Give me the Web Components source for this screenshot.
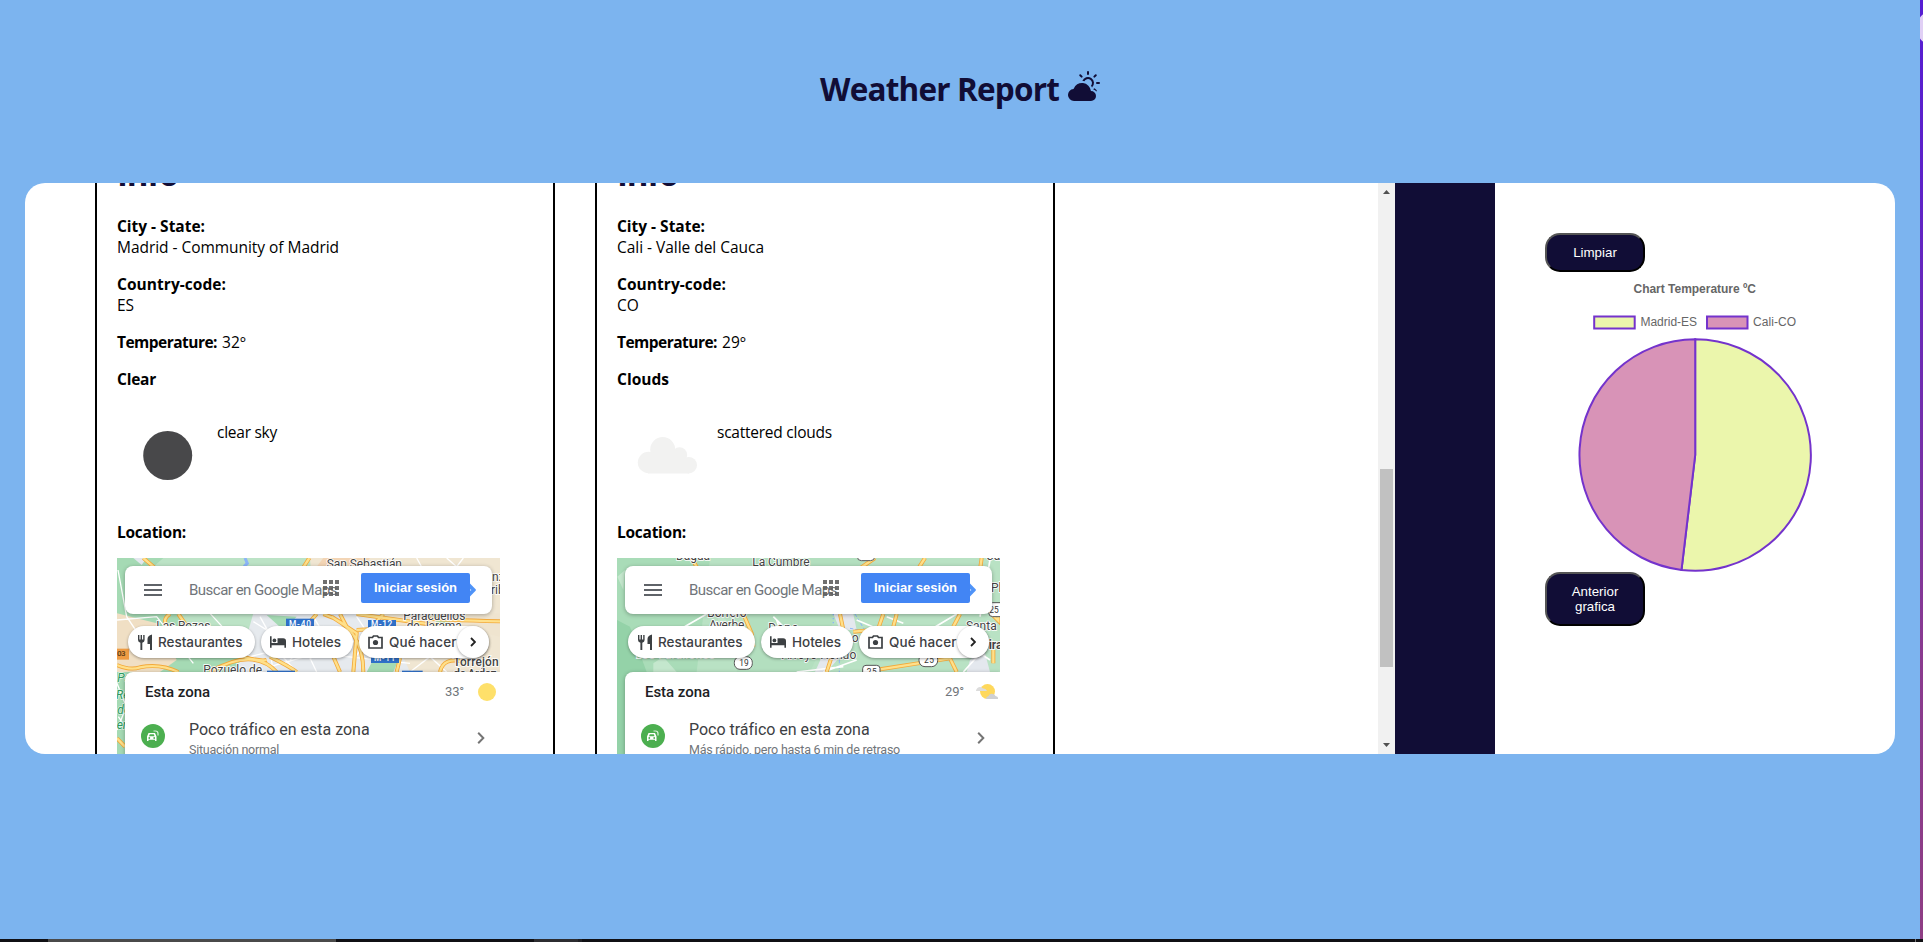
<!DOCTYPE html>
<html lang="es">
<head>
<meta charset="utf-8">
<title>Weather Report</title>
<style>
html,body{margin:0;height:100%;overflow:hidden;background:#7cb4ef}
body{font-family:"Open Sans","Noto Sans",sans-serif;font-size:16px;line-height:21px;color:#000}
</style>
</head>
<body>
<weather-app></weather-app>
<script>
function define(name, html, setup) {
  customElements.define(name, class extends HTMLElement {
    connectedCallback() {
      if (this.shadowRoot) return;
      this.attachShadow({ mode: 'open' }).innerHTML = typeof html === 'function' ? html(this) : html;
      if (setup) setup(this);
    }
  });
}

/* A single line of text, tracked so that it fills a given width. */
customElements.define('fit-text', class extends HTMLElement {
  connectedCallback() {
    if (this.shadowRoot) return;
    this.attachShadow({ mode: 'open' }).innerHTML =
      '<style>:host{display:inline-block;white-space:nowrap}span{display:inline-block;white-space:nowrap}</style><span><slot></slot></span>';
    const w = parseFloat(this.getAttribute('w'));
    const n = this.textContent.length;
    const s = this.shadowRoot.querySelector('span');
    const natural = s.getBoundingClientRect().width;
    if (natural) s.style.letterSpacing = ((w - natural) / n) + 'px';
    this.style.width = w + 'px';
  }
});

const MAPS = {
madrid: `
<rect x="21" y="24" width="1149" height="588" fill="#a5dab4"/>
<path d="M120 24H640L600 60L560 240L240 240Z" fill="#bce3c6"/>
<path d="M600 24H1170V366H640L560 300L610 180Z" fill="#f0e6d2"/>
<path d="M21 190L140 220L200 330L150 366H21Z" fill="#f0dfc4"/>
<path d="M640 24H780L750 70L620 50Z" fill="#f3d5b5"/>
<path d="M430 190L820 190L900 366H380Z" fill="#e6eaee"/>
<path d="M21 80L60 60L50 140L21 150ZM90 24H160L130 50ZM470 195L560 200L520 240ZM800 310L870 320L850 366H770ZM960 200L1030 190L1010 240Z" fill="#a5dab4"/>
<path d="M1000 190L1170 190V260L1080 240Z" fill="#efe4cf"/>
<path d="M70 24L95 45L110 24Z" fill="#e3e7ee"/>
<path d="M405 24L412 40L402 50" stroke="#8ab4f8" stroke-width="9" fill="none"/>
<g fill="none" stroke="#fff" stroke-width="4"><path d="M24 60L50 200L90 260M21 210L140 200L250 340M300 190L420 320L500 300L560 366M450 200L500 290L560 240L620 366M540 330L640 230L760 290M480 350L620 310L900 340M610 200L640 250L600 330M920 24L940 60M1010 24L1040 50L1060 24M880 210L960 240M900 366L960 320L1010 366M740 200L780 260L730 330M21 540L45 480M560 250L700 240L830 330M430 215L470 240L490 366M21 400L45 460M25 500L45 530"/></g>
<g fill="none" stroke="#f3a93a" stroke-width="12"><path d="M100 24L165 80M598 24L575 60M180 192Q150 210 180 240L240 270Q440 340 470 330M205 192L230 228M21 345Q60 362 90 352Q150 340 205 366M300 366Q430 290 500 366M620 192L560 260M665 200L740 250L730 366M640 192Q760 230 760 366M690 192L715 240M1170 214Q1000 210 940 205M820 192L790 225M670 320L690 366M870 324L860 366M740 192L1010 230M990 366Q1000 320 1060 335M21 565L45 590M740 240L830 235M480 320Q540 350 560 366"/></g>
<g fill="none" stroke="#ffe08a" stroke-width="7"><path d="M100 24L165 80M598 24L575 60M180 192Q150 210 180 240L240 270Q440 340 470 330M205 192L230 228M21 345Q60 362 90 352Q150 340 205 366M300 366Q430 290 500 366M620 192L560 260M665 200L740 250L730 366M640 192Q760 230 760 366M690 192L715 240M1170 214Q1000 210 940 205M820 192L790 225M670 320L690 366M870 324L860 366M740 192L1010 230M990 366Q1000 320 1060 335M21 565L45 590M740 240L830 235M480 320Q540 350 560 366"/></g>
<g fill="#2f70c9"><rect x="528" y="206" width="84" height="40"/><rect x="774" y="210" width="84" height="30"/><rect x="783" y="306" width="84" height="33"/><rect x="471" y="362" width="84" height="20"/><rect x="876" y="362" width="62" height="20"/></g>
<rect x="10" y="296" width="47" height="33" fill="#ee9b43"/>
<g font-family="Roboto,sans-serif" font-weight="500" font-size="25" fill="#fff"><text x="537" y="230" textLength="66">M-40</text><text x="783" y="232" textLength="64">M-12</text><text x="792" y="332" textLength="64">M-11</text><text x="21" y="319" font-size="24" fill="#5a3a16" textLength="26">03</text></g>
<g font-family="Roboto,sans-serif" font-size="36" fill="#444" stroke="#fff" stroke-width="5" paint-order="stroke"><text x="22" y="25" fill="#fff" stroke="none" textLength="185">Guadarrama</text><text x="650" y="54" textLength="226">San Sebastián</text><text x="880" y="209" textLength="186">Paracuellos</text><text x="890" y="240" textLength="165">de Jarama</text><text x="139" y="240" textLength="162">Las Rozas</text><text x="280" y="373" textLength="176">Pozuelo de</text><text x="1030" y="347" font-weight="500" textLength="136">Torrejón</text><text x="1030" y="385" font-weight="500" textLength="130">de Ardoz</text><text x="1146" y="94">nz</text><text x="1143" y="131">rib</text></g>
<g font-family="Roboto,sans-serif" font-style="italic" font-size="36" fill="#2c9a5e" stroke="#e4f5e9" stroke-width="4" paint-order="stroke"><text x="22" y="396">Pa</text><text x="18" y="446">Re</text><text x="22" y="493">de</text><text x="20" y="538">er</text></g>`,
cali: `
<rect x="21" y="24" width="1149" height="588" fill="#b9e2c4"/>
<path d="M21 24H300L260 366H21Z" fill="#a9dcb8"/><path d="M21 210L60 230L110 366L45 420V612H21Z" fill="#94d2a8"/>
<path d="M440 24H760L600 366H380Z" fill="#b3dfbf"/>
<path d="M22 80L45 60L40 120ZM130 340L160 320L200 366H130ZM320 192L350 210L330 230Z" fill="#c4e7cd"/>
<path d="M640 310L690 320L650 366H615ZM670 192H730L740 240L690 240ZM1080 330L1120 290L1140 366H1070Z" fill="#e4e8ee"/>
<path d="M670 60V240" stroke="#8ab4f8" stroke-width="4" stroke-dasharray="4 8"/><path d="M688 330V366M720 235L800 250M735 192L770 250" stroke="#8ab4f8" stroke-width="3" stroke-dasharray="10 6"/>
<g fill="none" stroke="#fff" stroke-width="5"><path d="M290 192L190 250M490 200L530 240L480 230M500 210L510 240M830 200L880 220M740 210L930 290M1040 192L960 240M560 366L700 350M740 330L640 366M1060 366L1110 310L1140 330M1140 30L1110 200"/></g>
<g fill="none" stroke="#f3a93a" stroke-width="12"><path d="M245 24L265 60M750 55L795 24M945 24L925 55M1115 24L1110 60M400 192L425 250L430 290M690 192L700 240M820 192L805 235M860 192L850 230M730 245L790 240M665 320L650 366M810 358L1020 325L1040 366M1165 192V212L1145 192M1050 192L1030 230M1150 300V340"/></g>
<g fill="none" stroke="#ffe08a" stroke-width="7"><path d="M245 24L265 60M750 55L795 24M945 24L925 55M1115 24L1110 60M400 192L425 250L430 290M690 192L700 240M820 192L805 235M860 192L850 230M730 245L790 240M665 320L650 366M810 358L1020 325L1040 366M1165 192V212L1145 192M1050 192L1030 230M1150 300V340"/></g>
<g fill="#fff" stroke="#555" stroke-width="3"><rect x="373" y="320" width="54" height="38" rx="17"/><rect x="927" y="310" width="56" height="40" rx="18"/><rect x="758" y="346" width="52" height="40" rx="10"/><rect x="742" y="2" width="52" height="30" rx="12"/><rect x="1136" y="158" width="54" height="42" rx="12"/></g>
<g font-family="Roboto,sans-serif" font-size="25" fill="#333"><text x="388" y="348" textLength="28">19</text><text x="942" y="340" textLength="30">25</text><text x="770" y="374" textLength="30">25</text><text x="1138" y="189" textLength="28">25</text></g>
<g font-family="Roboto,sans-serif" font-size="36" fill="#444" stroke="#fff" stroke-width="5" paint-order="stroke"><text x="198" y="30" textLength="102">Dagua</text><text x="427" y="47" textLength="172">La Cumbre</text><text x="292" y="200" textLength="118">Borrero</text><text x="297" y="236" textLength="106">Ayerbe</text><text x="475" y="246" textLength="90">Dapa</text><text x="515" y="327" textLength="224">Arroyo Hondo</text><text x="725" y="276">o</text><text x="1068" y="239" textLength="92">Santa</text><text x="1136" y="298" font-weight="700">ira</text><text x="1143" y="127">Pla</text><text x="1128" y="30">Ca</text><text x="75" y="328" stroke="none" fill="#fff" textLength="240">Los Farallones</text></g>`
};

define('app-title', `
<style>
:host{display:flex;justify-content:center;height:183px;box-sizing:border-box;padding-top:69px;color:#110d36}
h1{margin:0;font-size:31.500px;line-height:43px;font-weight:700;display:flex;gap:9px}
svg{width:32px;height:32px;display:block}
fit-text{margin-top:-2px}
</style>
<h1><fit-text w="239">Weather Report</fit-text>
<svg viewBox="0 0 16 16" fill="currentColor"><path d="M11.473 11a4.5 4.5 0 0 0-8.72-.99A3 3 0 0 0 3 16h8.5a2.5 2.5 0 0 0 0-5h-.027z"/><path d="M10.5 1.5a.5.5 0 0 0-1 0v1a.5.5 0 0 0 1 0v-1zm3.743 1.964a.5.5 0 1 0-.707-.707l-.708.707a.5.5 0 0 0 .708.708l.707-.708zm-7.779-.707a.5.5 0 0 0-.707.707l.707.708a.5.5 0 1 0 .708-.708l-.708-.707zm1.734 3.374a2 2 0 1 1 3.296 2.198c.199.281.372.582.516.898a3 3 0 1 0-4.84-3.225c.352.011.696.055 1.028.129zm4.484 4.074c.6.215 1.125.59 1.522 1.072a.5.5 0 0 0 .039-.742l-.707-.707a.5.5 0 0 0-.854.377zM14.5 6.5a.5.5 0 0 0 0 1h1a.5.5 0 0 0 0-1h-1z"/></svg></h1>`);

define('map-chip', `
<style>
:host{display:flex;align-items:center;flex:none;box-sizing:border-box;height:32px;border-radius:16px;background:#fff;box-shadow:0 1px 3px rgba(0,0,0,.35);color:#3c4043;font:500 13.5px/32px Inter,sans-serif}
</style><slot></slot>`);

define('map-frame', el => `
<style>
:host{display:block;position:relative;width:383px;height:300px;overflow:hidden;font-family:Roboto,sans-serif}
.bg{position:absolute;left:0;top:0;width:383px;height:196px}
.ui{position:relative;padding:8px 0 0 8px}
.search{box-sizing:border-box;width:367px;height:48px;border-radius:8px;background:#fff;box-shadow:0 1px 4px rgba(0,0,0,.3);display:flex;align-items:flex-start;color:#70757a;font-size:15px}
.burger{margin:18px 0 0 19px;width:18px;height:12px;flex:none}
.ph{margin:14px 0 0 27px;line-height:20px;width:147px;flex:none}
.apps{width:16px;height:16px;margin:14px 0 0 -13px;flex:none}
.in{margin:7px 0 0 22px;width:109px;height:30px;flex:none;border-radius:2px;background:#4285f4;color:#fff;font:bold 13px/29px "Liberation Sans",Arial,sans-serif;text-align:center}
.dir{width:6px;height:14px;margin-top:17px;flex:none}
.chips{display:flex;gap:6px;margin:12px 0 0 3px}
.chips svg{flex:none}
.next{width:32px;margin-left:-32px;justify-content:center}
.card{margin-top:14px;background:#fff;border-radius:8px 0 0 0;height:190px;box-shadow:0 1px 4px rgba(0,0,0,.3)}
.head{display:flex;align-items:flex-start;padding:11px 0 0 20px;height:33px;box-sizing:border-box}
.head b{font-weight:500;font-size:15px;line-height:19px;color:#202124;flex:none;width:300px}
.head span{font-size:13px;line-height:18px;color:#70757a;width:29px}
.row{display:flex;padding-left:16px;align-items:flex-start}
.car{width:24px;height:24px;margin-top:19px;flex:none}
.txt{margin-left:24px;padding-top:14px;width:280px}
.t1{font-size:16px;line-height:22px;color:#3c4043}
.t2{font-size:12.500px;line-height:18px;color:#70757a;margin-top:0}
.chev{width:8px;height:12px;margin:27px 0 0 8px}
</style>
<svg class="bg" viewBox="21 24 1149 588">${MAPS[el.getAttribute('place')]}</svg>
<div class="ui">
 <div class="search">
  <svg class="burger" viewBox="0 0 18 12"><path d="M0 1h18M0 6h18M0 11h18" stroke="#5f6368" stroke-width="2"/></svg>
  <div class="ph"><fit-text w="148">Buscar en Google Maps</fit-text></div>
  <svg class="apps" viewBox="0 0 16 16" fill="#5f5f5f" fill-opacity=".9"><path d="M0 0h4v4H0zM6 0h4v4H6zM12 0h4v4h-4zM0 6h4v4H0zM6 6h4v4H6zM12 6h4v4h-4zM0 12h4v4H0zM6 12h4v4H6zM12 12h4v4h-4z"/></svg>
  <div class="in"><fit-text w="83">Iniciar sesión</fit-text></div>
  <svg class="dir" viewBox="0 0 6 14"><path d="M0 .5L5.6 6.300Q6.200 7 5.600 7.700L0 13.500Z" fill="#4f93f8"/><path d="M0 6l1.500 1L0 8z" fill="#cfe1ff"/></svg>
 </div>
 <div class="chips">
  <map-chip style="width:127px;padding-left:10px"><svg width="14" height="16" viewBox="0 0 14 16"><path d="M0 1h1.400v4.500h1.200V1H4v4.500h1.200V1h1.400v5Q6.600 8 4.300 8.800V16H2.400V8.800Q0 8 0 6ZM14 .5V16h-2V10H9.500V5Q9.500 1.500 14 .5Z" fill="#3c4043"/></svg><fit-text w="84.500" style="margin-left:6px">Restaurantes</fit-text></map-chip>
  <map-chip style="width:92px;padding-left:9px"><svg width="16" height="12" viewBox="0 0 17 12"><path d="M0 0h1.700v7H8V2h6q3 0 3 3v7h-1.700V9.500H1.700V12H0Z" fill="#3c4043"/><circle cx="4.700" cy="4.300" r="2" fill="#3c4043"/></svg><fit-text w="49" style="margin-left:6px">Hoteles</fit-text></map-chip>
  <map-chip style="width:130px;padding-left:9px"><svg width="15" height="14" viewBox="0 0 15 14"><path d="M1 2.500h3.500L5.500 1h4l1 1.500H14V13H1Z" fill="none" stroke="#3c4043" stroke-width="1.700"/><circle cx="7.500" cy="7.500" r="2.600" fill="#3c4043"/></svg><fit-text w="67.500" style="margin-left:6px">Qué hacer</fit-text></map-chip>
  <map-chip class="next" style="margin-left:-38px"><svg width="6" height="10" viewBox="0 0 6 10"><path d="M1 1l4 4-4 4" fill="none" stroke="#222" stroke-width="1.800"/></svg></map-chip>
 </div>
 <div class="card">
  <div class="head"><b><fit-text w="65">Esta zona</fit-text></b><span><fit-text w="19">${el.getAttribute('temp')}</fit-text></span>${
   el.getAttribute('place') === 'madrid'
   ? '<svg width="24" height="18" viewBox="0 0 24 18" style="margin-left:1px"><circle cx="12" cy="9" r="9" fill="#fee06a"/></svg>'
   : '<svg width="24" height="18" viewBox="0 0 24 18" style="margin-left:1px"><circle cx="12.500" cy="8.500" r="7.500" fill="#fed85c"/><path d="M1 7.500Q2 4 5 4Q7 4 8 5.500Q11 5 12 8H1Z" fill="#dcdcdc"/><path d="M11 16Q11 13.500 13.500 13Q14.500 10.500 17 10.700Q20 11 20.500 13Q23.500 13.500 23 16Z" fill="#cfd0d2"/></svg>'}</div>
  <div class="row">
   <svg class="car" viewBox="0 0 24 24"><circle cx="12" cy="12" r="12" fill="#4caf50"/><path d="M6 17V12.500L7.500 9H14L15.500 12.500V17H14V15.800H7.500V17Z" fill="#fff"/><path d="M8 12.200L8.800 10.200H12.800L13.500 12.200Z" fill="#4caf50"/><circle cx="8.300" cy="14" r=".9" fill="#4caf50"/><circle cx="13.200" cy="14" r=".9" fill="#4caf50"/><path d="M12.500 7H14.500Q17 7 17 9.500V11.500" fill="none" stroke="#d8f0d9" stroke-width="1.200"/></svg>
   <div class="txt"><div class="t1"><fit-text w="180">Poco tráfico en esta zona</fit-text></div><div class="t2"><fit-text w="${el.getAttribute('sw')}">${el.getAttribute('status')}</fit-text></div></div>
   <svg class="chev" viewBox="0 0 8 12"><path d="M1.200 .8L6.300 6l-5.100 5.200" fill="none" stroke="#757575" stroke-width="2"/></svg>
  </div>
 </div>
</div>`);

define('city-card', el => {
const a = n => el.getAttribute(n);
return `
<style>
:host{display:block;flex:none;box-sizing:border-box;width:460px;height:900px;border:2px solid #000;padding:20px}
h2{margin:0 0 21px;font-size:33px;line-height:43px;font-weight:700;color:#110d36}
p{margin:0 0 16px;font-weight:400}
b{font-weight:700}
.v{font-weight:370}
b,.v{display:inline-flex;vertical-align:top;font-size:15.500px}
.l{display:flex;gap:5px}
.sky{display:flex;height:100px;margin-bottom:16px}
.sky svg{width:100px;height:100px;flex:none}
.sky p{margin-top:16px}
</style>
<h2><fit-text w="61">Info</fit-text></h2>
<p><b><fit-text w="88">City - State:</fit-text></b><br><span class="v"><fit-text w="${a('cw')}">${a('city')}</fit-text></span></p>
<p><b><fit-text w="109">Country-code:</fit-text></b><br><span class="v"><fit-text w="${a('ccw')}">${a('code')}</fit-text></span></p>
<p class="l"><b><fit-text w="100">Temperature:</fit-text></b><span class="v"><fit-text w="24">${a('temp')}</fit-text></span></p>
<p><b><fit-text w="${a('mw')}">${a('main')}</fit-text></b></p>
<div class="sky">${a('main') === 'Clear'
 ? '<svg viewBox="0 0 100 100"><circle cx="50.700" cy="49.500" r="24.500" fill="#48484a"/></svg>'
 : '<svg viewBox="0 0 100 100" fill="#f2f2f1"><circle cx="45.700" cy="43.500" r="12.500"/><circle cx="62.500" cy="49" r="7.700"/><circle cx="31.500" cy="56.500" r="10.700"/><circle cx="71.700" cy="59.200" r="8.300"/><path d="M31 48L60 44L72 55V67.500H31Z"/></svg>'}
 <p><span class="v"><fit-text w="${a('dw')}">${a('desc')}</fit-text></span></p></div>
<p style="margin-bottom:15px"><b><fit-text w="69">Location:</fit-text></b></p>
<map-frame place="${a('place')}" temp="${a('maptemp')}" status="${a('status')}" sw="${a('sw')}"></map-frame>`;});

define('scroll-bar', `
<style>
:host{display:flex;flex-direction:column;align-items:center;width:17px;background:#f1f1f1;flex:none}
svg{width:7px;height:4px;margin-top:7px}
i{width:13px;height:198px;background:#c1c1c1;margin-top:275px}
svg:last-child{margin-top:76px}
</style>
<svg viewBox="0 0 7 4"><path d="M0 4L3.500 0L7 4Z" fill="#505050"/></svg><i></i><svg viewBox="0 0 7 4"><path d="M0 0L3.500 4L7 0Z" fill="#505050"/></svg>`);

define('app-button', `
<style>
:host{display:block}
button{display:block;box-sizing:border-box;width:100px;padding:10px 20px;border:2px outset #000;border-color:#555 #000 #000 #555;border-radius:15px;background:#110d36;color:#fff;font:13.333px/15px "Liberation Sans",Arial,sans-serif;text-align:center}
</style><button><slot></slot></button>`);

define('temp-chart', () => {
const c = 150.2, cy = 183, r = 115.7, t = 186.8 * Math.PI / 180;
const x = (c + r * Math.sin(t)).toFixed(2), y = (cy - r * Math.cos(t)).toFixed(2);
return `
<style>:host{display:block;width:300px;height:300px}svg{display:block}</style>
<svg width="300" height="300" viewBox="0 0 300 300" font-family="Liberation Sans,Arial,sans-serif" font-size="12" fill="#666">
<text x="88.500" y="21" font-weight="700" textLength="122.500">Chart Temperature ºC</text>
<g stroke="#7433cc" stroke-width="2">
<rect x="49.200" y="44.500" width="40.500" height="12" fill="#ebf6ac"/><rect x="162" y="44.500" width="40.500" height="12" fill="#d893b7"/>
<path d="M${c} ${cy}V${cy - r}A${r} ${r} 0 1 1 ${x} ${y}Z" fill="#ebf6ac"/>
<path d="M${c} ${cy}L${x} ${y}A${r} ${r} 0 0 1 ${c} ${cy - r}Z" fill="#d893b7"/></g>
<text x="95.500" y="54" textLength="56.500">Madrid-ES</text><text x="208" y="54" textLength="43">Cali-CO</text>
</svg>`;});

define('weather-app', `
<style>
:host{display:grid;grid-template-columns:1920px 3px;grid-template-rows:939px 3px;width:1923px;height:942px;overflow:hidden}
.panel{display:flex;margin:0 25px;height:571px;background:#fff;border-radius:20px;overflow:hidden}
.list{width:1283px;flex:none;display:flex;gap:40px;padding-left:70px;align-items:flex-start;overflow:hidden}
.list city-card{margin-top:-53px}
.bar{width:100px;background:#110d36;flex:none}
.side{flex:1;padding:50px 0 0 50px}
.edge{background:radial-gradient(circle at 14px 28px,#e0cff5 0 17px,transparent 18px),linear-gradient(#561dd3,#5e22c8 20%,#8a3b8f 70%,#8e3d84);grid-row:1;grid-column:2}
.task{grid-column:1/3;background:linear-gradient(90deg,transparent 48px,#4a4a4a 48px 336px,transparent 336px 534px,#2c2c30 534px 578px,#202024 578px 582px,transparent 582px 1915px,#777 1915px 1916px,transparent 1916px),#101014}
</style>
<main><app-title></app-title>
<div class="panel">
<div class="list">
<city-card place="madrid" city="Madrid - Community of Madrid" cw="222" code="ES" ccw="17" temp="32º" main="Clear" mw="39" desc="clear sky" dw="60" maptemp="33°" status="Situación normal" sw="90"></city-card>
<city-card place="cali" city="Cali - Valle del Cauca" cw="147" code="CO" ccw="22" temp="29º" main="Clouds" mw="52" desc="scattered clouds" dw="115" maptemp="29°" status="Más rápido, pero hasta 6 min de retraso" sw="211"></city-card>
</div>
<scroll-bar></scroll-bar>
<div class="bar"></div>
<div class="side"><app-button>Limpiar</app-button><temp-chart></temp-chart><app-button>Anterior grafica</app-button></div>
</div></main>
<div class="edge"></div>
<div class="task"></div>`);
</script>
</body>
</html>
